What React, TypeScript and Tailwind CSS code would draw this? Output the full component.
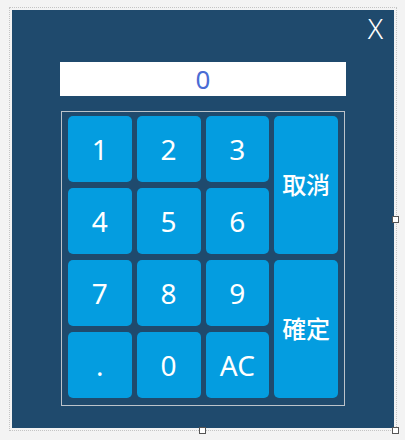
import React from 'react';

const keys: { label: string; col: string; row: string; cjk?: boolean }[] = [
  { label: '1', col: 'col-start-1', row: 'row-start-1' },
  { label: '2', col: 'col-start-2', row: 'row-start-1' },
  { label: '3', col: 'col-start-3', row: 'row-start-1' },
  { label: '取消', col: 'col-start-4', row: 'row-start-1 row-span-2', cjk: true },
  { label: '4', col: 'col-start-1', row: 'row-start-2' },
  { label: '5', col: 'col-start-2', row: 'row-start-2' },
  { label: '6', col: 'col-start-3', row: 'row-start-2' },
  { label: '7', col: 'col-start-1', row: 'row-start-3' },
  { label: '8', col: 'col-start-2', row: 'row-start-3' },
  { label: '9', col: 'col-start-3', row: 'row-start-3' },
  { label: '確定', col: 'col-start-4', row: 'row-start-3 row-span-2', cjk: true },
  { label: '.', col: 'col-start-1', row: 'row-start-4' },
  { label: '0', col: 'col-start-2', row: 'row-start-4' },
  { label: 'AC', col: 'col-start-3', row: 'row-start-4' },
];

const Handle: React.FC<{ className: string }> = ({ className }) => (
  <div className={`absolute w-[7px] h-[7px] bg-white border border-[#555] ${className}`} />
);

const App: React.FC = () => {
  return (
    <div
      className="relative w-[405px] h-[440px] bg-[#f3f3f3] pt-[7px] pl-[9px]"
      style={{ fontFamily: '"Noto Sans", "Noto Sans CJK TC", sans-serif' }}
    >
      <div className="w-[388px] h-[424px] border border-dotted border-[#c4c4c4] p-[2px]">
        <div className="w-full h-full bg-[#1f4a6d] flex flex-col">
          <div className="flex justify-end items-start pr-[11px] pt-[4px] h-[52px]">
            <button className="text-white text-[28px] leading-none font-light h-[28px]">X</button>
          </div>

          <div className="ml-[48px] w-[286px] h-[34px] bg-white flex items-center justify-center">
            <span className="text-[#4a6cd4] text-[26px] leading-none">0</span>
          </div>

          <div className="mt-[15px] ml-[49px] w-[284px] border border-[#bcc3ca] pl-[6px] pr-[6px] pt-[4px] pb-[7px]">
            <div className="grid grid-cols-4 grid-rows-[repeat(4,66px)] w-[270px] gap-x-[5px] gap-y-[6px]">
              {keys.map((k) => (
                <button
                  key={k.label}
                  className={`${k.col} ${k.row} rounded-[5px] bg-[#049de0] text-white flex items-center justify-center leading-none ${
                    k.cjk ? 'text-[24px] font-medium' : 'text-[28px]'
                  }`}
                >
                  {k.label}
                </button>
              ))}
            </div>
          </div>
        </div>
      </div>

      <Handle className="left-[392px] top-[216px]" />
      <Handle className="left-[199px] top-[427px]" />
      <Handle className="left-[392px] top-[427px]" />
    </div>
  );
};

export default App;
